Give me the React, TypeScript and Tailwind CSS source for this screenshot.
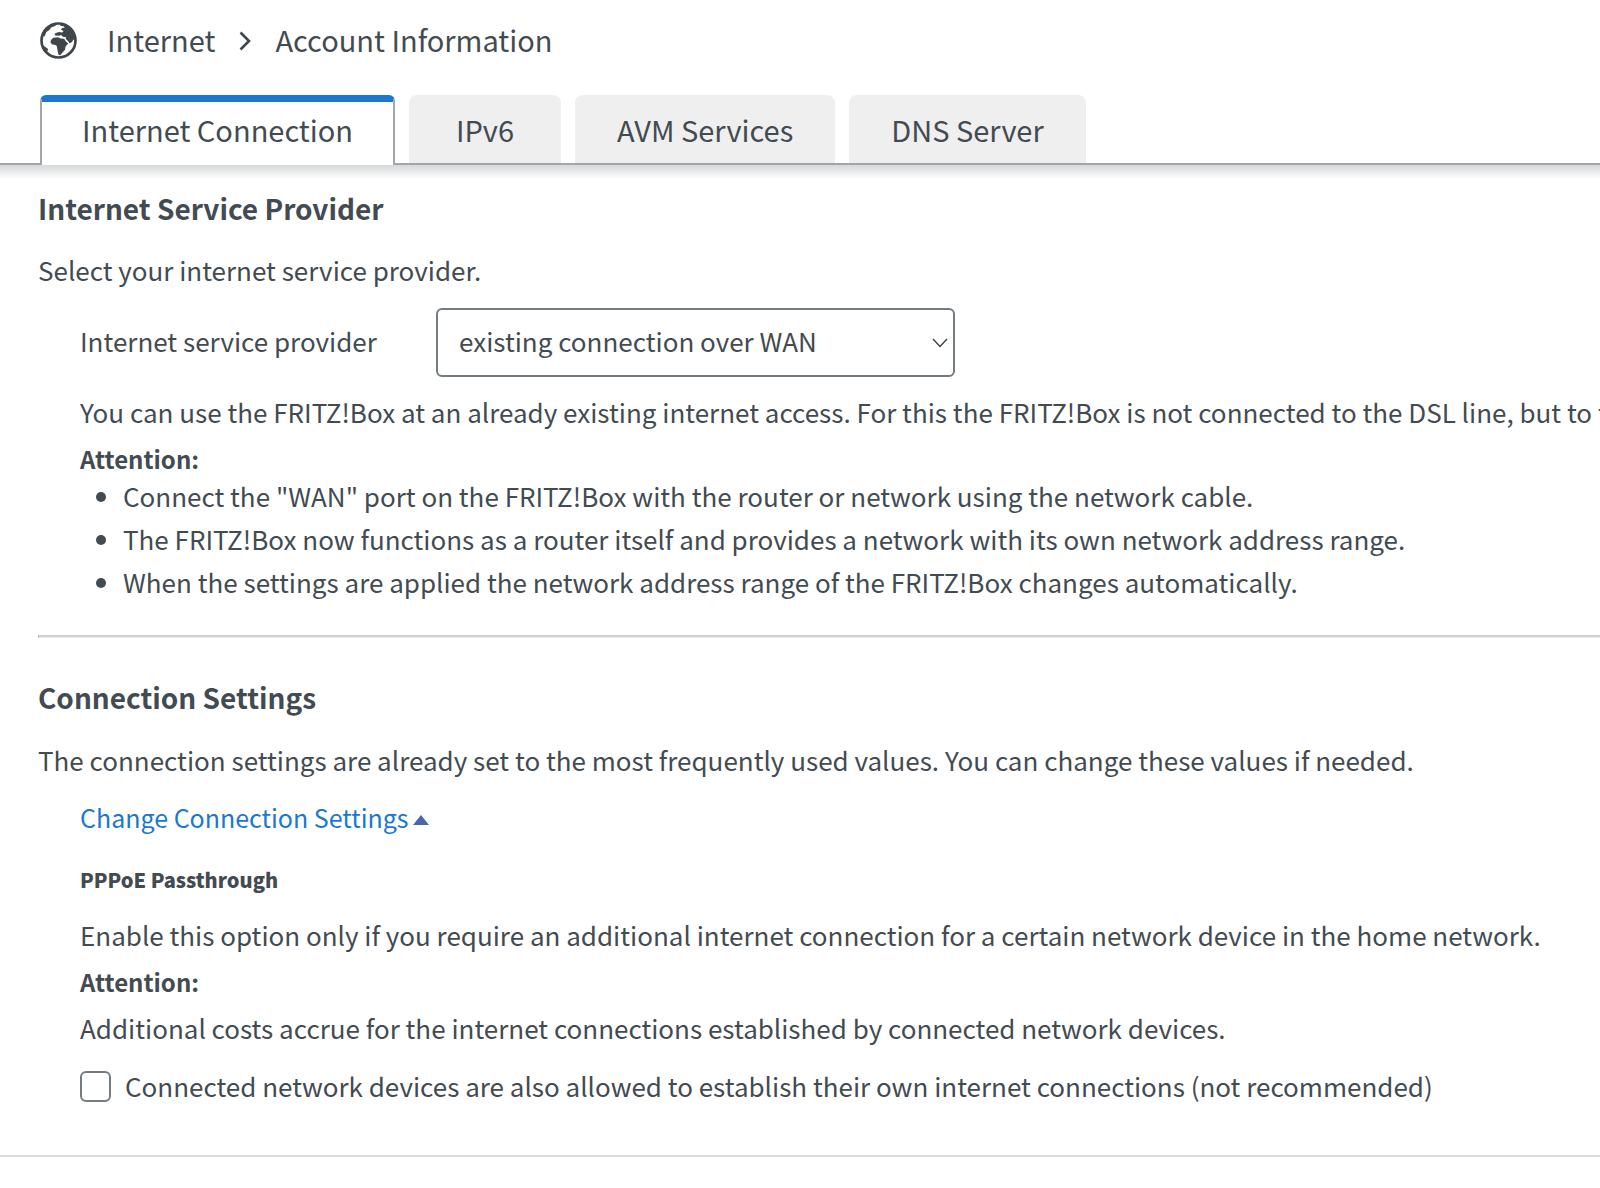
import React from "react";

const tabs = ["Internet Connection", "IPv6", "AVM Services", "DNS Server"];

const notes = [
  'Connect the "WAN" port on the FRITZ!Box with the router or network using the network cable.',
  "The FRITZ!Box now functions as a router itself and provides a network with its own network address range.",
  "When the settings are applied the network address range of the FRITZ!Box changes automatically.",
];

function GlobeIcon() {
  return (
    <svg viewBox="0 0 110 110" className="size-[37px] shrink-0" aria-hidden="true">
      <circle cx="55" cy="55" r="50.5" fill="#fff" stroke="#3f464c" strokeWidth="8" />
      {/* Europe and Asia */}
      <path
        fill="#3f464c"
        d="M62 4 L82 10 L98 25 L107 45 L106 56 L100 52 L94 60 L88 63 L82 55 L76 50 L78 45 L68 44 L63 39 L57 41 L45 40 L43 35 L51 31 L58 30 L66 31 L70 27 L62 23 L66 18 L74 17 L70 13 L60 11 Z"
      />
      {/* Africa */}
      <path
        fill="#3f464c"
        d="M33 53 L40 47 L54 45 L61 49 L72 50 L77 58 L84 64 L76 73 L74 83 L67 91 L60 99 L55 97 L52 84 L50 71 L44 68 L36 67 L31 60 Z"
      />
      {/* America */}
      <path fill="#3f464c" d="M5 68 L14 73 L24 80 L22 87 L16 91 L8 80 Z" />
      <path fill="#3f464c" d="M5 42 L16 20 L34 7 L52 4 L46 11 L33 16 L28 24 L19 30 L14 42 Z" />
    </svg>
  );
}

export default function App() {
  return (
    <div className="overflow-hidden bg-white font-['Noto_Sans_CJK_JP','Noto_Sans_CJK_SC',sans-serif] text-[26px] leading-[43px] text-[#434b52]">
      {/* Breadcrumb */}
      <nav className="flex h-[95px] items-start px-10 pt-[18px] text-[29px]">
        <div className="flex items-center">
          <GlobeIcon />
          <a href="#internet" className="ml-[30px] pb-[2px]">
            Internet
          </a>
          <svg viewBox="0 0 12 20" className="mx-6 h-5 w-3" fill="none" aria-hidden="true">
            <path d="M1.5 1.5 L10 10 L1.5 18.5" stroke="#3f464c" strokeWidth="2.6" />
          </svg>
          <span className="pb-[2px]">Account Information</span>
        </div>
      </nav>

      {/* Tabs */}
      <div className="flex gap-[14px] border-b-2 border-[#a3a6a9] px-10 text-[29px]">
        {tabs.map((tab, i) => (
          <button
            key={tab}
            type="button"
            className={
              i === 0
                ? "-mb-[2px] h-[70px] rounded-t-md border-x-2 border-t-[7px] border-x-[#a3a6a9] border-t-[#1a78d2] bg-white px-10 pb-[9px]"
                : "min-w-[152px] rounded-t-lg bg-[#efefef] px-[42px]"
            }
          >
            {tab}
          </button>
        ))}
      </div>
      <div className="h-[14px] bg-linear-to-b from-[#d6d8d9] to-white" />

      <main className="pl-[38px]">
        {/* Internet Service Provider */}
        <section>
          <h2 className="pt-2 text-[28px] font-bold">Internet Service Provider</h2>
          <p className="mt-[18px]">Select your internet service provider.</p>
          <div className="pl-[42px]">
            <div className="mt-[17px] flex items-center">
              <label htmlFor="provider" className="w-[356px] pb-1">
                Internet service provider
              </label>
              <div className="relative w-[519px]">
                <select
                  id="provider"
                  className="h-[69px] w-full appearance-none rounded-md border-2 border-[#757c81] bg-white pr-12 pb-1 pl-[21px]"
                >
                  <option>existing connection over WAN</option>
                </select>
                <svg
                  viewBox="0 0 16 10"
                  className="pointer-events-none absolute top-[30px] right-[7px] h-[10px] w-4"
                  fill="none"
                  aria-hidden="true"
                >
                  <path d="M1 1 L8 8.5 L15 1" stroke="#3f464c" strokeWidth="1.5" />
                </svg>
              </div>
            </div>
            <p className="mt-[13px] whitespace-nowrap">
              You can use the FRITZ!Box at an already existing internet access. For this the
              FRITZ!Box is not connected to the DSL line, but to the
            </p>
            <p className="mt-1 text-[24px] font-bold">Attention:</p>
            <ul className="-mt-[6px] list-disc pl-[43px]">
              {notes.map((note) => (
                <li key={note}>{note}</li>
              ))}
            </ul>
          </div>
        </section>

        <hr className="mt-8 h-[3px] border-t-2 border-b border-l border-t-[#cfd0d1] border-b-[#ebebeb] border-l-[#9a9c9e]" />

        {/* Connection Settings */}
        <section>
          <h2 className="pt-[38px] text-[28px] font-bold">Connection Settings</h2>
          <p className="mt-[19px]">
            The connection settings are already set to the most frequently used values. You can
            change these values if needed.
          </p>
          <div className="pl-[42px]">
            <a href="#settings" className="mt-[15px] flex items-center gap-1 text-[25px] text-[#1a78d2]">
              Change Connection Settings
              <svg viewBox="0 0 16 10" className="mt-1 h-[10px] w-4" aria-hidden="true">
                <path d="M8 0 L16 10 L0 10 Z" fill="#4468a8" />
              </svg>
            </a>
            <h3 className="mt-[19px] text-[20px] font-black">PPPoE Passthrough</h3>
            <p className="mt-3">
              Enable this option only if you require an additional internet connection for a
              certain network device in the home network.
            </p>
            <p className="mt-1 text-[24px] font-bold">Attention:</p>
            <p className="mt-[3px]">
              Additional costs accrue for the internet connections established by connected
              network devices.
            </p>
            <div className="mt-[15px] flex items-center gap-[14px]">
              <input
                id="passthrough"
                type="checkbox"
                className="size-[31px] appearance-none rounded-md border-2 border-[#757c81] bg-white checked:bg-[#1a78d2]"
              />
              <label htmlFor="passthrough" className="pb-[2px]">
                Connected network devices are also allowed to establish their own internet
                connections (not recommended)
              </label>
            </div>
          </div>
        </section>
      </main>

      <footer className="mt-[46px] h-[33px] border-t-2 border-[#d9dadb]" />
    </div>
  );
}
